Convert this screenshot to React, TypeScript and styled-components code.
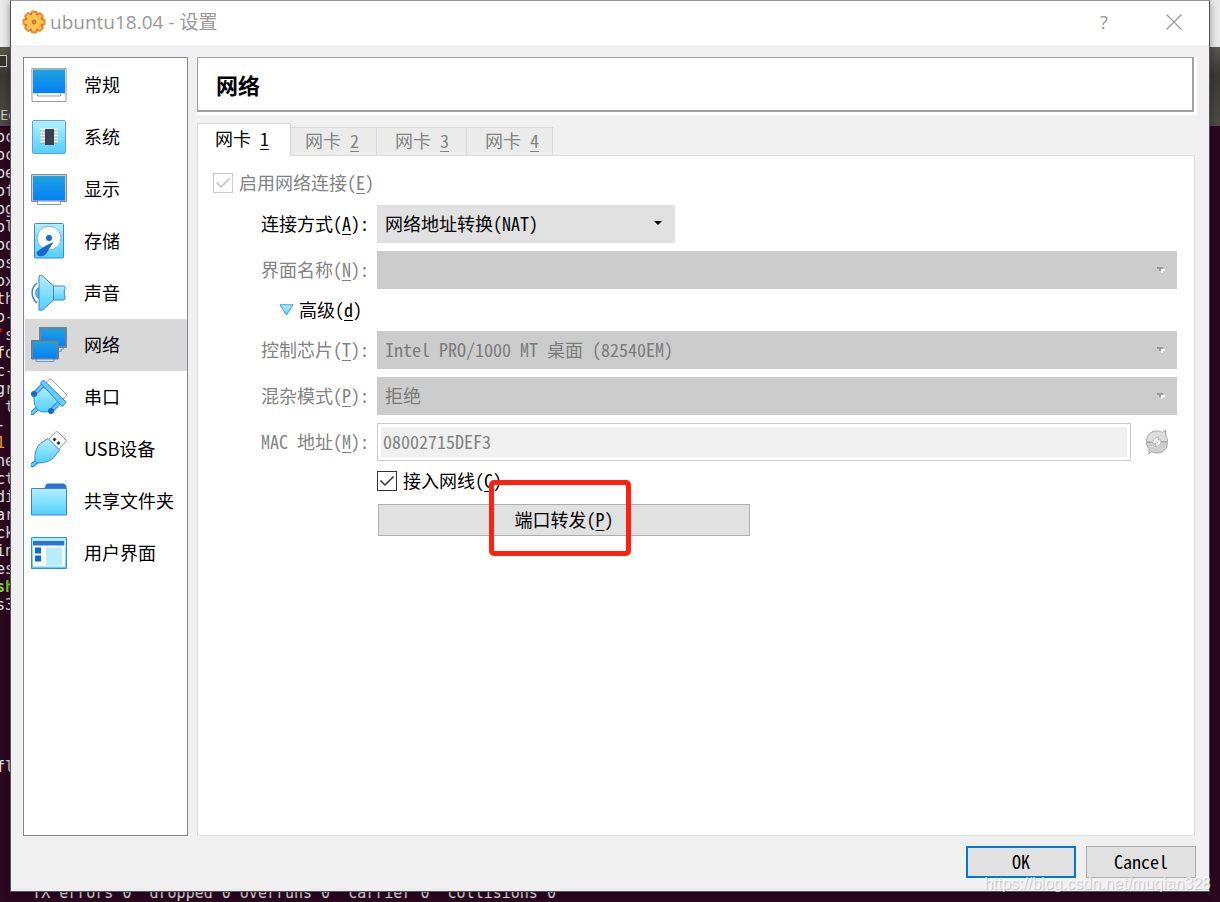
import React from "react";
import styled, { createGlobalStyle, css } from "styled-components";

const MONO = '"Noto Sans Mono CJK SC", "Noto Sans CJK SC", "Liberation Mono", monospace';
const UI = '"Noto Sans CJK SC", "Open Sans", sans-serif';

const GlobalStyle = createGlobalStyle`
  *, *::before, *::after { box-sizing: border-box; }
  body { margin: 0; }
  button, input, select { margin: 0; font: inherit; color: inherit; }
`;

const Desktop = styled.div`
  position: relative;
  display: flex;
  flex-direction: column;
  min-height: 100vh;
  padding: 0 10px 10px;
  overflow: hidden;
  background: #2c0720;
  font-family: ${MONO};
  font-size: 18px;
  line-height: 24px;
  color: #000;
`;

/* terminal window behind the dialog */
const Terminal = styled.div`
  position: absolute;
  inset: 0;
  overflow: hidden;
`;
const TopStrip = styled.div`
  height: 47px;
  background: #ebebeb;
`;
const TermTitle = styled.div`
  display: flex;
  align-items: center;
  height: 27px;
  background: linear-gradient(#5a574e, #3b3a35);
`;
const TermButton = styled.span`
  width: 7px;
  height: 12px;
  border: 1px solid #d5d3cc;
  border-left: 0;
  background: #33322e;
`;
const TermMenu = styled.div`
  height: 52px;
  padding-top: 28px;
  background: linear-gradient(#3a3934, #4d4b44);
  font: 15px/24px "Open Sans", sans-serif;
  color: #c9c7c0;
`;
const TermText = styled.pre`
  margin: 2px 0 0 -4px;
  font: 15px/18px "DejaVu Sans Mono", monospace;
  color: #e6e3e5;
`;
const Hue = styled.span<{ $color: string; $bold?: boolean }>`
  color: ${(p) => p.$color};
  font-weight: ${(p) => (p.$bold ? 700 : 400)};
`;

const Dialog = styled.main`
  position: relative;
  display: flex;
  flex: 1;
  flex-direction: column;
  border: 1px solid #55525a;
  border-top-color: #999;
  background: #f0f0f0;
  box-shadow: 0 2px 8px rgba(0, 0, 0, 0.4);
`;
const TitleBar = styled.header`
  display: flex;
  align-items: center;
  height: 44px;
  padding: 0 26px 2px 11px;
  background: #fff;
  color: #999;
  font-family: "Open Sans", "Noto Sans CJK SC", sans-serif;
`;
const Title = styled.h1`
  flex: 1;
  margin: 0 0 0 4px;
  font-size: 19px;
  font-weight: 400;
`;
const TitleButton = styled.button`
  display: flex;
  align-items: center;
  justify-content: center;
  width: 18px;
  height: 24px;
  padding: 0;
  border: 0;
  background: none;
  & + & { margin-left: 52px; }
`;
const Body = styled.div`
  display: flex;
  flex: 1;
  gap: 9px;
  padding: 12px 12px 0;
`;

const Sidebar = styled.nav`
  flex: none;
  width: 165px;
  padding: 1px 0 0 1px;
  border: 1px solid #828790;
  background: #fff;
  font-family: ${UI};
`;
const NavItem = styled.button<{ $active: boolean }>`
  display: flex;
  align-items: center;
  gap: 17px;
  width: 100%;
  height: 52px;
  padding: 0 0 0 6px;
  border: 0;
  background: ${(p) => (p.$active ? "#d9d9d9" : "none")};
  white-space: nowrap;
  svg { flex: none; }
  span { padding-bottom: 3px; }
`;

const Content = styled.section`
  display: flex;
  flex: 1;
  flex-direction: column;
  min-width: 0;
`;
const HeadingFrame = styled.div`
  padding: 0 3px 3px 0;
  background: #fff;
`;
const Heading = styled.h2`
  margin: 0;
  padding: 0 18px;
  border: solid #a0a0a0;
  border-width: 1px 2px 2px 1px;
  font: 700 22px/52px ${UI};
`;
const Tabs = styled.div`
  display: flex;
  align-items: flex-end;
  height: 33px;
  margin-top: 8px;
`;
const Tab = styled.button<{ $active: boolean }>`
  height: 29px;
  padding: 0 17px 4px 18px;
  border: solid #d9d9d9;
  border-width: 1px 0 1px 1px;
  background: #ebebeb;
  color: #838383;
  white-space: pre;
  &:last-child { padding-right: 13px; border-right-width: 1px; }
  ${(p) =>
    p.$active &&
    css`
      position: relative;
      z-index: 1;
      height: 33px;
      margin-right: -5px;
      padding-right: 21px;
      padding-left: 17px;
      border-width: 1px 1px 0;
      background: #fff;
      color: #000;
    `}
`;
const Pane = styled.div`
  flex: 1;
  margin: -1px 2px 0 0;
  padding: 15px 17px 16px 15px;
  border: 1px solid #dcdcdc;
  background: #fff;
`;

const Check = styled.label<{ $dim?: boolean }>`
  display: flex;
  align-items: center;
  gap: 6px;
  width: max-content;
  height: 24px;
  color: ${(p) => (p.$dim ? "#838383" : "#000")};
  span { padding-bottom: 2px; }
`;
const CheckBox = styled.input.attrs({ type: "checkbox" })`
  appearance: none;
  display: grid;
  place-content: center;
  width: 20px;
  height: 20px;
  border: 1px solid #333;
  background: #fff;
  &::before {
    content: "";
    width: 14px;
    height: 10px;
    background: #333;
    clip-path: polygon(0 5px, 1px 4px, 5px 8px, 13px 0, 14px 1px, 5px 10px);
  }
  &:not(:checked)::before { visibility: hidden; }
  &:disabled { border-color: #ccc; }
  &:disabled::before { background: #bfbfbf; }
`;

const Form = styled.div`
  display: grid;
  grid-template-columns: 156px minmax(0, 1fr);
  column-gap: 8px;
  row-gap: 8px;
  align-items: center;
  margin-top: 10px;
`;
const Label = styled.label<{ $dim?: boolean }>`
  padding-bottom: 3px;
  text-align: right;
  white-space: pre;
  color: ${(p) => (p.$dim ? "#838383" : "#000")};
`;
const SelectBox = styled.div<{ $narrow?: boolean }>`
  display: grid;
  align-items: center;
  width: ${(p) => (p.$narrow ? "298px" : "100%")};
  & > * { grid-area: 1 / 1; }
  svg { justify-self: end; margin-right: 12px; pointer-events: none; }
`;
const Select = styled.select`
  appearance: none;
  width: 100%;
  height: 38px;
  padding: 0 24px 3px 8px;
  border: 0;
  border-radius: 0;
  background: #e1e1e1;
  &:disabled { background: #ccc; color: #7b7b7b; opacity: 1; }
`;
const AdvancedRow = styled.div`
  display: flex;
  align-items: center;
  justify-content: flex-end;
  grid-column: 1;
  height: 26px;
  padding-right: 7px;
`;
const AdvancedButton = styled.button`
  display: flex;
  align-items: center;
  gap: 5px;
  padding: 0;
  border: 0;
  background: none;
  span { padding-bottom: 2px; }
`;
const MacRow = styled.div`
  display: flex;
  align-items: center;
  gap: 14px;
  padding-right: 8px;
`;
const MacInput = styled.input`
  flex: 1;
  min-width: 0;
  height: 38px;
  padding: 0 5px 3px;
  border: 1px solid #ccc;
  border-radius: 0;
  background: #f0f0f0;
  box-shadow: inset 0 0 0 3px #fff;
  color: #838383;
`;
const IconButton = styled.button`
  display: flex;
  padding: 0;
  border: 0;
  background: none;
`;
const Actions = styled.div`
  grid-column: 2;
`;
const ForwardWrap = styled.div`
  position: relative;
  width: 372px;
  margin: 11px 0 0 1px;
`;
const PushButton = styled.button<{ $primary?: boolean; $wide?: boolean }>`
  width: ${(p) => (p.$wide ? "100%" : "110px")};
  height: 32px;
  padding: 0 0 3px;
  border: ${(p) => (p.$primary ? "2px solid #0078d7" : "1px solid #adadad")};
  background: #e1e1e1;
`;
const Highlight = styled.div`
  position: absolute;
  top: -24px;
  left: 111px;
  width: 142px;
  height: 76px;
  border: 5px solid #ff2010;
  border-radius: 5px;
  pointer-events: none;
`;
const Footer = styled.footer`
  display: flex;
  justify-content: flex-end;
  gap: 10px;
  padding: 10px 13px 13px;
`;
const Watermark = styled.div`
  position: absolute;
  right: 9px;
  bottom: 6px;
  font: 16px/24px "Liberation Sans", sans-serif;
  color: rgba(255, 255, 255, 0.7);
  text-shadow: 1px 1px 1px rgba(0, 0, 0, 0.2);
  pointer-events: none;
`;
const Defs = styled.svg`
  position: absolute;
`;

const Gradients = () => (
  <Defs width="0" height="0" aria-hidden="true">
    <defs>
      <linearGradient id="screen" x1="0" y1="0" x2="0" y2="1">
        <stop offset="0" stopColor="#1fa3e0" />
        <stop offset="1" stopColor="#0380f8" />
      </linearGradient>
      <linearGradient id="ice" x1="0" y1="0" x2="0" y2="1">
        <stop offset="0" stopColor="#b4efff" />
        <stop offset="1" stopColor="#52d0ff" />
      </linearGradient>
      <linearGradient id="gold" x1="0" y1="0" x2="0" y2="1">
        <stop offset="0" stopColor="#ffdf7a" />
        <stop offset="1" stopColor="#fbab2c" />
      </linearGradient>
      <linearGradient id="rim" x1="0" y1="0" x2="0" y2="1">
        <stop offset="0" stopColor="#ee9a3c" />
        <stop offset="1" stopColor="#dd4f12" />
      </linearGradient>
    </defs>
  </Defs>
);

const Icon = ({ children }: { children: React.ReactNode }) => (
  <svg width="36" height="36" viewBox="0 0 36 36" fill="none" aria-hidden="true">
    {children}
  </svg>
);

const GeneralIcon = () => (
  <Icon>
    <path d="M1 26h34v8.500H1z" fill="#fff" stroke="#999" />
    <path d="M.8 1.500h34.400V26.500H.8z" fill="#ddd" stroke="#aaa" />
    <path d="M2 2.500h32v23.500H2z" fill="url(#screen)" />
    <path d="M1.500 27h33" stroke="#fff" />
    <path d="M6.500 26.500v2.500h23v-2.500" fill="#fff" stroke="#999" />
  </Icon>
);
const SystemIcon = () => (
  <Icon>
    <rect x="1.500" y="1.500" width="33" height="33" rx="1" fill="url(#ice)" stroke="#5da0e4" />
    <path d="M9 10.500h18M9 13.500h18M9 16.500h18M9 19.500h18M9 22.500h18" stroke="#fff" strokeWidth="2" />
    <path d="M9 12h18M9 15h18M9 18h18M9 21h18M9 24h18" stroke="#8fa9b8" strokeWidth=".7" />
    <path d="M14 10h9v16h-9z" fill="#3c404c" />
  </Icon>
);
const DisplayIcon = () => (
  <Icon>
    <path d="M6.500 29v4.500h23V29" fill="#fff" stroke="#999" />
    <path d="M.5 3.500h35v27H.5z" fill="#ccc" stroke="#8a8a8a" />
    <path d="M2 5h32v24.500H2z" fill="url(#screen)" />
    <path d="M7 31h22" stroke="#fff" />
  </Icon>
);
const StorageIcon = () => (
  <Icon>
    <rect x="3.500" y=".5" width="29" height="34.500" rx="1" fill="url(#ice)" stroke="#3f86d8" />
    <circle cx="18" cy="15" r="12" fill="#fff" stroke="#6fb8ee" />
    <circle cx="18" cy="15" r="3" fill="#1669cf" />
    <path d="M22.500 19 15 22.500 6 28.500c-1 2 0 4 2 4.500 3 .5 5 0 7-2z" fill="#1669cf" />
  </Icon>
);
const SoundIcon = () => (
  <Icon>
    <path d="M6 8C-.5 13-.5 22 6 28" stroke="#3a80d4" strokeWidth="1.500" />
    <path d="M8 13H7c-3 1-3 9 0 10h1z" fill="#52b6f5" stroke="#4a96e0" />
    <path d="M22 11h10.500c2 0 2 2 1.500 3-1 2-1 4 0 7.500.5 2.500-.5 3.500-2 3.500H22z" fill="url(#ice)" stroke="#3a84d8" />
    <path d="M8 .8c2-.6 4 0 5 1.500L22.500 11v14L12 34.500c-1.500 1-3 1-4 .5z" fill="url(#ice)" stroke="#3a84d8" />
  </Icon>
);
const NetworkIcon = () => (
  <Icon>
    <path d="M27 20v4.500h3.500V22h2v-2" fill="#bcd4e8" stroke="#6f8ba6" strokeWidth=".8" />
    <path d="M8.500.5h27v20h-27z" fill="#6d8496" stroke="#6d8496" />
    <path d="M10 2h24v17H10z" fill="url(#screen)" />
    <path d="M5 31v3.500h18V31" fill="#c6dcf0" stroke="#6f9cc6" />
    <path d="M.5 13.500h27v18.500H.5z" fill="#6d8496" stroke="#5d7b96" />
    <path d="M2 15h24v16H2z" fill="url(#screen)" />
  </Icon>
);
const SerialIcon = () => (
  <Icon>
    <path d="M15 3.500 18 .8c1-.7 2-.5 3 0L35 15c1 1 .5 2-1 3.500l-3 2z" fill="#fff" stroke="#999" />
    <path d="M7 28.500 1.500 34" stroke="#2f7cd0" strokeWidth="4.500" strokeLinecap="round" />
    <path d="M7 28.500 1.500 34" stroke="#5bcaff" strokeWidth="2.500" strokeLinecap="round" />
    <path d="M11 7 3 15v5c0 7 3 13 10 13 5 0 8-1 11-4l7-6z" fill="url(#ice)" stroke="#3a84d8" />
    <path d="m3 15 9-9M20 32l8-8" stroke="#2f7cd0" strokeWidth="4.500" />
    <path d="m3 15 9-9M20 32l8-8" stroke="#60ccff" strokeWidth="2.500" />
    <path d="m9.500 4 3-3L35 23l-3 4c-1 .5-2 0-2-1z" fill="#62cdff" stroke="#3a84d8" />
    <circle cx="3" cy="15" r="3" fill="#1669cf" />
    <circle cx="20" cy="32" r="3" fill="#1669cf" />
  </Icon>
);
const UsbIcon = () => (
  <Icon>
    <path d="m17.500 8.500 7-7.500c1-.7 2-.5 3 .5l8 8-8 9z" fill="#fff" stroke="#999" />
    <path d="m22.500 7.500 2 2M26.500 11l2 2" stroke="#333" strokeWidth="3" />
    <path d="m5.500 31-4 3" stroke="#2f7cd0" strokeWidth="4.500" strokeLinecap="round" />
    <path d="m5.500 31-4 3" stroke="#5bcaff" strokeWidth="2.500" strokeLinecap="round" />
    <path d="M17 7.500 28.500 19l-6 7.500C18 31 12 32 6 32l-2-2C3.500 22 5 17 9.500 12.500z" fill="url(#ice)" stroke="#3a84d8" />
  </Icon>
);
const FolderIcon = () => (
  <Icon>
    <path d="M13.500 6 16 1h17l2 2v4z" fill="#2d74d2" stroke="#2d74d2" />
    <path d="M.5 5.500h35v26.500H.5z" fill="url(#ice)" stroke="#3a84d8" />
  </Icon>
);
const InterfaceIcon = () => (
  <Icon>
    <path d="M.5 2.500h35v31H.5z" fill="url(#ice)" stroke="#3f8ad0" />
    <path d="M2 10h32v21.500H2z" fill="#fff" />
    <path d="M2 6h31v4.500H2z" fill="#2c73d2" />
    <path d="M4 12.500h6v6H4zM4 20.500h6v6H4z" fill="#1168d4" />
    <path d="M15 12.500h16v18H15z" fill="#b9ecfb" />
  </Icon>
);

const TEETH = [0, 45, 90, 135, 180, 225, 270, 315];
const GearIcon = () => (
  <svg width="24" height="24" viewBox="0 0 24 24" aria-hidden="true">
    <g fill="url(#rim)">
      <circle cx="12" cy="12" r="10" />
      {TEETH.map((a) => (
        <rect key={a} x="8.500" y=".4" width="7" height="7" rx="2" transform={`rotate(${a} 12 12)`} />
      ))}
    </g>
    <g fill="#ffc552">
      <circle cx="12" cy="12" r="7.600" />
      {TEETH.map((a) => (
        <rect key={a} x="10" y="2.400" width="4" height="6" rx="1.500" transform={`rotate(${a} 12 12)`} />
      ))}
    </g>
    <circle cx="12" cy="12" r="2" fill="#dd8a2a" stroke="#c9701c" />
  </svg>
);
const CloseIcon = () => (
  <svg width="16" height="16" viewBox="0 0 16 16" aria-hidden="true">
    <path d="m.5.5 15 15m0-15-15 15" stroke="#999" strokeWidth="1.200" />
  </svg>
);
const Arrow = ({ dim }: { dim?: boolean }) => (
  <svg width="9" height="6" viewBox="0 0 9 6" aria-hidden="true">
    {dim ? (
      <>
        <path d="M4 2h5v2H7v2H5V4H4z" fill="#fff" />
        <path d="M1 0h6v2H5v2H3V2H1z" fill="#999" />
      </>
    ) : (
      <path d="M0 0h8L4 4z" fill="#000" />
    )}
  </svg>
);
const TriangleIcon = () => (
  <svg width="15" height="12" viewBox="0 0 15 12" aria-hidden="true">
    <path d="M1 .8h13L7.500 11z" fill="url(#ice)" stroke="#3f94de" strokeLinejoin="round" />
  </svg>
);
const RefreshIcon = () => (
  <svg width="24" height="26" viewBox="0 0 24 26" aria-hidden="true">
    <path
      d="M1.500 12.500C1.500 6 6 2 12 2c2 0 4 .6 5.500 1.500L20.500 1v5.500c1.500 2 2 4 2 6H14l-2-1-3 2z"
      fill="#dedede"
      stroke="#a8a8a8"
    />
    <path
      d="M22.500 13.500c0 6.500-4.500 10.500-10.500 10.500-2 0-4-.6-5.500-1.500L4 25v-5.500c-2-2-2.500-4-2.500-6H10l2 1 3-2z"
      fill="#cfcfcf"
      stroke="#a8a8a8"
    />
    <path d="m13.500 8-.5 3h3c.5 3-1.500 6-5.500 6.500l.5-3H8c-.5-3 1.500-6 5.500-6.500z" fill="#fff" stroke="#a8a8a8" strokeWidth=".8" />
    <path d="m11.500 12.500 1 1.500" stroke="#a8a8a8" />
  </svg>
);

const NAV = [
  ["常规", GeneralIcon],
  ["系统", SystemIcon],
  ["显示", DisplayIcon],
  ["存储", StorageIcon],
  ["声音", SoundIcon],
  ["网络", NetworkIcon],
  ["串口", SerialIcon],
  ["USB设备", UsbIcon],
  ["共享文件夹", FolderIcon],
  ["用户界面", InterfaceIcon],
] as const;

const Key = styled.u`
  text-underline-offset: 3px;
  text-decoration-thickness: 1px;
`;

export default function App() {
  return (
    <Desktop>
      <GlobalStyle />
      <Gradients />
      <Terminal aria-hidden="true">
        <TopStrip />
        <TermTitle>
          <TermButton />
        </TermTitle>
        <TermMenu>Ed</TermMenu>
        <TermText>
          {"oc\noc\nbe\nof\nog\nol\noo\nos\nox\nth\no-\n"}
          <Hue $color="#c8282d">'</Hue>
          {"s\nfo\nc-\ngr\n t\n-\n"}
          <Hue $color="#e8944a">1</Hue>
          {"\nne\nct\ndi\nar\nck\nin\nes\n"}
          <Hue $color="#7fd630" $bold>sh</Hue>
          {"\ns3" + "\n".repeat(9) + "fl" + "\n".repeat(7)}
          {"    TX errors 0  dropped 0 overruns 0  carrier 0  collisions 0"}
        </TermText>
      </Terminal>

      <Dialog>
        <TitleBar>
          <GearIcon />
          <Title>ubuntu18.04 - 设置</Title>
          <TitleButton aria-label="Help">?</TitleButton>
          <TitleButton aria-label="Close">
            <CloseIcon />
          </TitleButton>
        </TitleBar>

        <Body>
          <Sidebar>
            {NAV.map(([name, Glyph]) => (
              <NavItem key={name} $active={name === "网络"}>
                <Glyph />
                <span>{name}</span>
              </NavItem>
            ))}
          </Sidebar>

          <Content>
            <HeadingFrame>
              <Heading>网络</Heading>
            </HeadingFrame>
            <Tabs role="tablist">
              {[1, 2, 3, 4].map((n) => (
                <Tab key={n} role="tab" aria-selected={n === 1} $active={n === 1}>
                  网卡 <Key>{n}</Key>
                </Tab>
              ))}
            </Tabs>
            <Pane role="tabpanel">
              <Check $dim>
                <CheckBox defaultChecked disabled />
                <span>启用网络连接(<Key>E</Key>)</span>
              </Check>
              <Form>
                <Label htmlFor="attached">连接方式(<Key>A</Key>):</Label>
                <SelectBox $narrow>
                  <Select id="attached">
                    <option>网络地址转换(NAT)</option>
                  </Select>
                  <Arrow />
                </SelectBox>

                <Label htmlFor="name" $dim>界面名称(<Key>N</Key>):</Label>
                <SelectBox>
                  <Select id="name" disabled />
                  <Arrow dim />
                </SelectBox>

                <AdvancedRow>
                  <AdvancedButton aria-expanded="true">
                    <TriangleIcon />
                    <span>高级(<Key>d</Key>)</span>
                  </AdvancedButton>
                </AdvancedRow>
                <span />

                <Label htmlFor="adapter" $dim>控制芯片(<Key>T</Key>):</Label>
                <SelectBox>
                  <Select id="adapter" disabled>
                    <option>Intel PRO/1000 MT 桌面 (82540EM)</option>
                  </Select>
                  <Arrow dim />
                </SelectBox>

                <Label htmlFor="promiscuous" $dim>混杂模式(<Key>P</Key>):</Label>
                <SelectBox>
                  <Select id="promiscuous" disabled>
                    <option>拒绝</option>
                  </Select>
                  <Arrow dim />
                </SelectBox>

                <Label htmlFor="mac" $dim>MAC 地址(<Key>M</Key>):</Label>
                <MacRow>
                  <MacInput id="mac" defaultValue="08002715DEF3" disabled />
                  <IconButton disabled aria-label="Refresh">
                    <RefreshIcon />
                  </IconButton>
                </MacRow>

                <Actions>
                  <Check>
                    <CheckBox defaultChecked />
                    <span>接入网线(<Key>C</Key>)</span>
                  </Check>
                  <ForwardWrap>
                    <PushButton $wide>端口转发(<Key>P</Key>)</PushButton>
                    <Highlight />
                  </ForwardWrap>
                </Actions>
              </Form>
            </Pane>
          </Content>
        </Body>

        <Footer>
          <PushButton $primary>OK</PushButton>
          <PushButton>Cancel</PushButton>
        </Footer>
      </Dialog>
      <Watermark>https://blog.csdn.net/muqian328</Watermark>
    </Desktop>
  );
}
